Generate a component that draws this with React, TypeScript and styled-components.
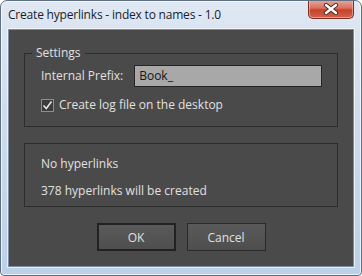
import React from "react";
import styled, { createGlobalStyle } from "styled-components";

const GlobalStyle = createGlobalStyle`
    html, body {
        margin: 0;
        padding: 0;
        background: #ffffff;
    }
    body {
        font-family: "Open Sans", "Noto Sans", "Liberation Sans", sans-serif;
    }
`;

const Window = styled.div`
    width: 362px;
    height: 276px;
    box-sizing: border-box;
    border: 1px solid #5f6f84;
    border-radius: 7px 7px 4px 4px;
    background: linear-gradient(to bottom, #dfe8f3 0%, #cfdcec 40%, #bcd0e8 100%);
    box-shadow: inset 0 0 0 1px rgba(255, 255, 255, 0.7);
    display: flex;
    flex-direction: column;
    overflow: hidden;
`;

const TitleBar = styled.div`
    height: 28px;
    display: flex;
    align-items: flex-start;
    justify-content: space-between;
    padding-left: 7px;
    flex-shrink: 0;
`;

const Title = styled.span`
    font-family: "Open Sans", "Noto Sans", sans-serif;
    font-size: 12px;
    line-height: 16px;
    margin-top: 6px;
    color: #1a1e28;
    letter-spacing: -0.2px;
`;

const CloseButton = styled.div`
    width: 46px;
    height: 19px;
    margin-right: 7px;
    margin-top: -1px;
    box-sizing: border-box;
    border: 1px solid #7a2e22;
    border-top: none;
    border-radius: 0 0 5px 5px;
    background: linear-gradient(to bottom, #e9a99c 0%, #d8705d 45%, #c8412b 55%, #d0644d 100%);
    box-shadow: inset 0 0 0 1px rgba(255, 210, 200, 0.5);
    display: flex;
    align-items: center;
    justify-content: center;
`;

const Client = styled.div`
    flex: 1;
    margin: 0 7px 8px 7px;
    background: #4a4a4a;
    border: 1px solid #7d8ea3;
    box-shadow: 0 0 0 1px rgba(255, 255, 255, 0.6);
    padding: 15px 15px 0 15px;
    display: flex;
    flex-direction: column;
    gap: 16px;
    color: #e0e0e0;
    font-size: 12px;
`;

const Group = styled.fieldset`
    margin: 0;
    padding: 4px 15px 13px 16px;
    border: 1px solid #2c2c2c;
    min-width: 0;
    display: flex;
    flex-direction: column;
    gap: 10px;
`;

const Legend = styled.legend`
    padding: 0 4px;
    margin-left: -9px;
    font-size: 12px;
    line-height: 16px;
    color: #e0e0e0;
`;

const Panel = styled.div`
    border: 1px solid #2c2c2c;
    padding: 12px 16px 7px 16px;
    display: flex;
    flex-direction: column;
    gap: 11px;
`;

const Row = styled.div`
    display: flex;
    align-items: center;
    gap: 11px;
    line-height: 16px;
`;

const TextLine = styled.div`
    line-height: 16px;
`;

const PrefixInput = styled.div`
    flex: 1;
    height: 22px;
    box-sizing: border-box;
    background: #a8a8a8;
    border: 1px solid #262626;
    color: #151515;
    padding: 0 4px;
    display: flex;
    align-items: center;
    font-size: 12px;
`;

const CheckRow = styled.label`
    display: flex;
    align-items: center;
    gap: 5px;
    line-height: 16px;
`;

const CheckBox = styled.span`
    width: 13px;
    height: 13px;
    box-sizing: border-box;
    border: 1px solid #8e8e8e;
    background: #3c3c3c;
    display: flex;
    align-items: center;
    justify-content: center;
`;

const ButtonRow = styled.div`
    display: flex;
    justify-content: center;
    gap: 11px;
`;

const DialogButton = styled.div<{ $default?: boolean }>`
    width: 79px;
    height: 28px;
    box-sizing: border-box;
    border: ${(p) => (p.$default ? "2px solid #222222" : "1px solid #2a2a2a")};
    background: linear-gradient(to bottom, #5a5a5a, #4e4e4e);
    color: #e0e0e0;
    font-size: 12px;
    display: flex;
    align-items: center;
    justify-content: center;
`;

export default function App() {
    return (
        <>
            <GlobalStyle />
            <Window>
                <TitleBar>
                    <Title>Create hyperlinks - index to names - 1.0</Title>
                    <CloseButton>
                        <svg width="16" height="12" viewBox="0 0 16 12">
                            <path
                                d="M3 2 L13 10 M13 2 L3 10"
                                stroke="#4a2a26"
                                strokeWidth="4.2"
                                strokeLinecap="round"
                            />
                            <path
                                d="M3 2 L13 10 M13 2 L3 10"
                                stroke="#ffffff"
                                strokeWidth="2.4"
                                strokeLinecap="round"
                            />
                        </svg>
                    </CloseButton>
                </TitleBar>
                <Client>
                    <Group>
                        <Legend>Settings</Legend>
                        <Row>
                            <span>Internal Prefix:</span>
                            <PrefixInput>Book_</PrefixInput>
                        </Row>
                        <CheckRow>
                            <CheckBox>
                                <svg width="11" height="11" viewBox="0 0 11 11">
                                    <path
                                        d="M1.5 5.5 L4.3 8.5 L9.5 1.5"
                                        stroke="#e6e6e6"
                                        strokeWidth="1.6"
                                        fill="none"
                                    />
                                </svg>
                            </CheckBox>
                            <span>Create log file on the desktop</span>
                        </CheckRow>
                    </Group>
                    <Panel>
                        <TextLine>No hyperlinks</TextLine>
                        <TextLine>378 hyperlinks will be created</TextLine>
                    </Panel>
                    <ButtonRow>
                        <DialogButton $default>OK</DialogButton>
                        <DialogButton>Cancel</DialogButton>
                    </ButtonRow>
                </Client>
            </Window>
        </>
    );
}
